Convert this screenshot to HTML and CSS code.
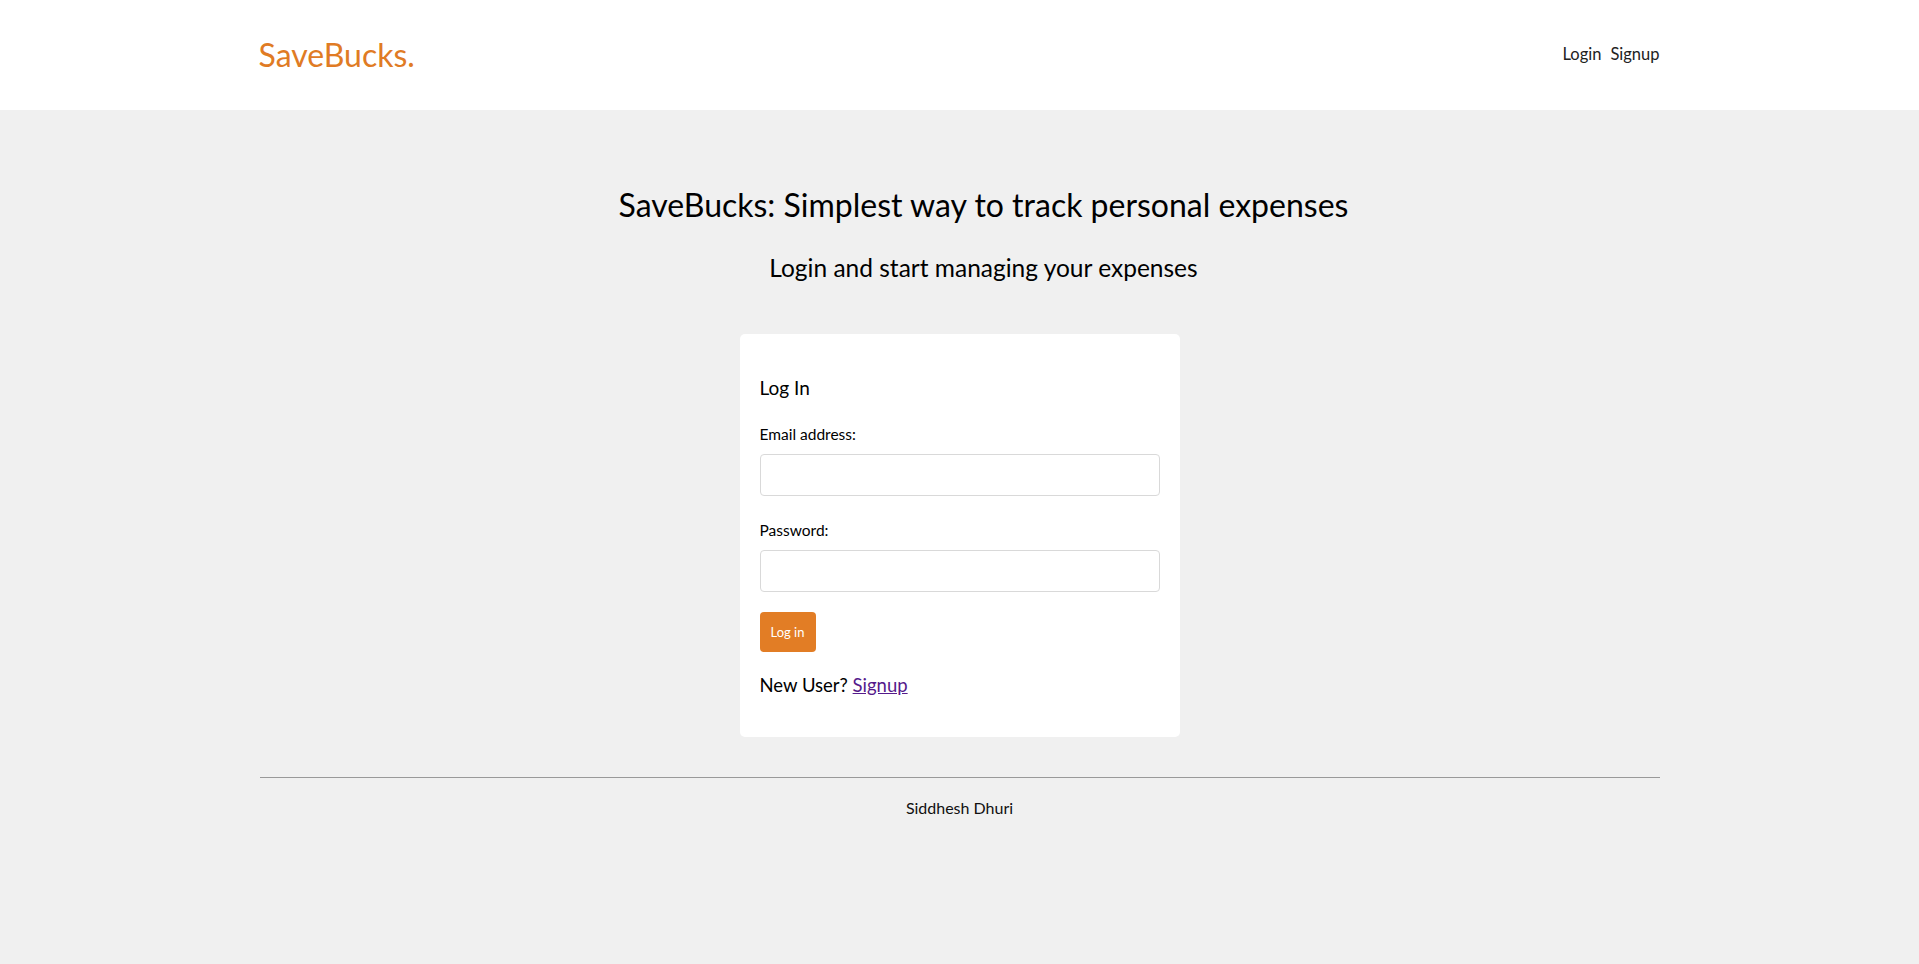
FILE: index.html
```html
<!DOCTYPE html>
<html lang="en">
<head>
<meta charset="utf-8">
<title>SaveBucks</title>
<link rel="stylesheet" href="styles.css">
</head>
<body>
<header class="topbar">
  <div class="container topbar-inner">
    <a class="brand" href="#">SaveBucks.</a>
    <nav class="nav">
      <a href="#" class="nav-link">Login</a>
      <a href="#" class="nav-link">Signup</a>
    </nav>
  </div>
</header>
<main class="main">
  <section class="intro">
    <h2 class="headline">SaveBucks: Simplest way to track personal expenses</h2>
    <h4 class="subhead">Login and start managing your expenses</h4>
  </section>
  <div class="card">
    <h5 class="card-title">Log In</h5>
    <form class="form">
      <label class="label">Email address:</label>
      <input class="input" type="email">
      <label class="label label-gap">Password:</label>
      <input class="input" type="password">
      <button type="button" class="btn">Log in</button>
    </form>
    <p class="newuser">New User? <a href="#" class="signup-link">Signup</a></p>
  </div>
  <div class="container footer">
    <hr class="rule">
    <p class="credit">Siddhesh Dhuri</p>
  </div>
</main>
</body>
</html>
```

FILE: styles.css
```css
* { box-sizing: border-box; }
html, body { margin: 0; padding: 0; }
body {
  background: #f0f0f0;
  font-family: Lato, "Open Sans", sans-serif;
  color: #000;
}
.container {
  max-width: 1400px;
  margin: 0 auto;
}
.topbar {
  background: #fff;
  height: 110px;
}
.topbar-inner {
  height: 110px;
  display: flex;
  align-items: center;
  justify-content: space-between;
}
.brand {
  color: #e07b24;
  font-size: 32px;
  text-decoration: none;
  padding-bottom: 2px;
  margin-left: -1px;
}
.nav {
  display: flex;
  gap: 9px;
  padding-bottom: 2px;
}
.nav-link {
  color: #222;
  text-decoration: none;
  font-size: 16.5px;
}
.main { padding-top: 1px; }
.intro {
  text-align: center;
  padding-left: 48px;
}
.headline {
  font-size: 32px;
  font-weight: 400;
  line-height: 1.2;
  margin: 75px 0 0;
}
.subhead {
  font-size: 24.5px;
  font-weight: 400;
  line-height: 1.2;
  margin: 29px 0 0;
}
.card {
  width: 440px;
  margin: 51px auto 0;
  background: #fff;
  border-radius: 5px;
  padding: 42px 20px 40px;
}
.card-title {
  font-size: 19px;
  font-weight: 400;
  line-height: 24px;
  margin: 0 0 22px;
}
.form {
  display: flex;
  flex-direction: column;
  align-items: flex-start;
}
.label {
  font-size: 15.5px;
  line-height: 24px;
  margin-bottom: 8px;
}
.label-gap { margin-top: 22px; }
.input {
  width: 100%;
  height: 42px;
  border: 1px solid #d9d9d9;
  border-radius: 4px;
  background: #fff;
  margin: 0;
}
.btn {
  margin-top: 20px;
  width: 56px;
  height: 40px;
  background: #e27d25;
  color: #fff;
  border: none;
  border-radius: 4px;
  font-family: inherit;
  font-size: 13px;
  padding: 0;
}
.newuser {
  font-size: 18.5px;
  line-height: 24px;
  margin: 21px 0 0;
}
.signup-link {
  color: #551a8b;
  text-decoration: underline;
}
.footer { padding-top: 40px; }
.rule {
  border: 0;
  border-top: 1px solid #999;
  margin: 0;
}
.credit {
  text-align: center;
  font-size: 16px;
  margin: 20px 0 0;
  color: #111;
}
```
